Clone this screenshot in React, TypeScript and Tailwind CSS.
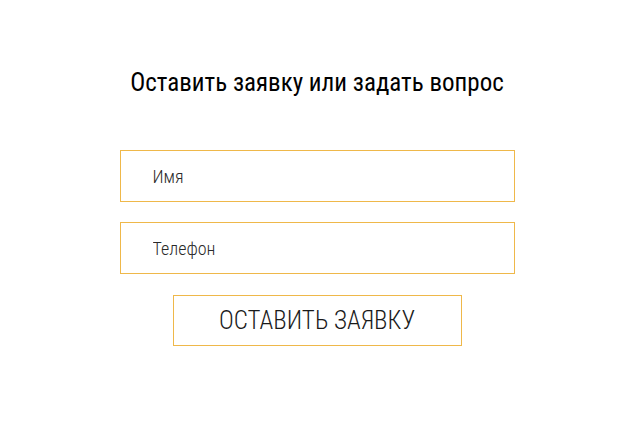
export default function App() {
  return (
    <div className="min-h-[427px] w-full bg-white pl-[10px] flex flex-col items-center" style={{ fontFamily: '"Roboto Condensed", Roboto, "Liberation Sans", sans-serif' }}>
      <h2 className="mt-[67px] text-[25px] leading-[32px] text-black font-normal">Оставить заявку или задать вопрос</h2>
      <form className="mt-[51px] flex flex-col items-center">
        <input
          className="w-[395px] h-[52px] border border-[#efb84a] px-[32px] text-[18px] font-light text-[#222] placeholder:text-[#2a2a2a] outline-none"
          placeholder="Имя"
        />
        <input
          className="mt-[20px] w-[395px] h-[52px] border border-[#efb84a] px-[32px] text-[18px] font-light text-[#222] placeholder:text-[#2a2a2a] outline-none"
          placeholder="Телефон"
        />
        <button type="button" className="mt-[21px] w-[289px] h-[51px] border border-[#efb84a] text-[25px] font-light text-[#1a1a1a] uppercase bg-white">
          Оставить заявку
        </button>
      </form>
    </div>
  );
}
